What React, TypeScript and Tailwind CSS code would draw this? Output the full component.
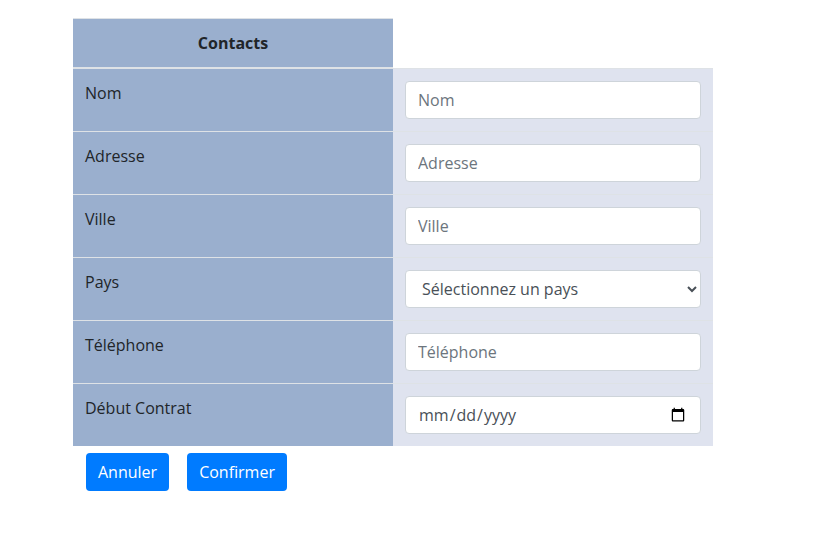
import React from "react";

const rows = [
  { label: "Nom", type: "text" },
  { label: "Adresse", type: "text" },
  { label: "Ville", type: "text" },
  { label: "Pays", type: "select" },
  { label: "Téléphone", type: "tel" },
  { label: "Début Contrat", type: "date" },
];

const inputClass =
  "block w-full h-[38px] rounded-[4px] border border-[#ced4da] bg-white px-3 py-1.5 text-base leading-6 text-[#495057] placeholder:text-[#6c757d] outline-none";

function Field({ label, type }: { label: string; type: string }) {
  if (type === "select") {
    return (
      <select className={inputClass} defaultValue="">
        <option value="">Sélectionnez un pays</option>
        <option value="fr">France</option>
        <option value="be">Belgique</option>
        <option value="ch">Suisse</option>
      </select>
    );
  }
  if (type === "date") {
    return <input type="date" className={inputClass} />;
  }
  return <input type={type} placeholder={label} className={inputClass} />;
}

export default function App() {
  return (
    <div
      className="min-h-[560px] bg-white pl-[73px] pt-[18px] text-[#212529]"
      style={{ fontFamily: '"Open Sans", "Noto Sans", sans-serif' }}
    >
      <table className="w-[640px] border-collapse table-fixed">
        <thead>
          <tr>
            <th className="w-[320px] border-t border-b-2 border-[#dee2e6] bg-[#9aafce] p-3 text-center text-base font-bold leading-6">
              Contacts
            </th>
            <th className="w-[320px]" />
          </tr>
        </thead>
        <tbody>
          {rows.map(row => (
            <tr key={row.label}>
              <td className="border-t border-[#dee2e6] bg-[#9aafce] p-3 align-top text-base leading-6">
                {row.label}
              </td>
              <td className="border-t border-[#dee2e6] bg-[#dfe3ef] p-3 align-top">
                <Field label={row.label} type={row.type} />
              </td>
            </tr>
          ))}
        </tbody>
      </table>
      <div className="mt-[7px] flex gap-[18px] pl-[13px]">
        <button className="h-[38px] rounded-[4px] bg-[#007bff] px-3 text-base leading-6 text-white">
          Annuler
        </button>
        <button className="h-[38px] rounded-[4px] bg-[#007bff] px-3 text-base leading-6 text-white">
          Confirmer
        </button>
      </div>
    </div>
  );
}
